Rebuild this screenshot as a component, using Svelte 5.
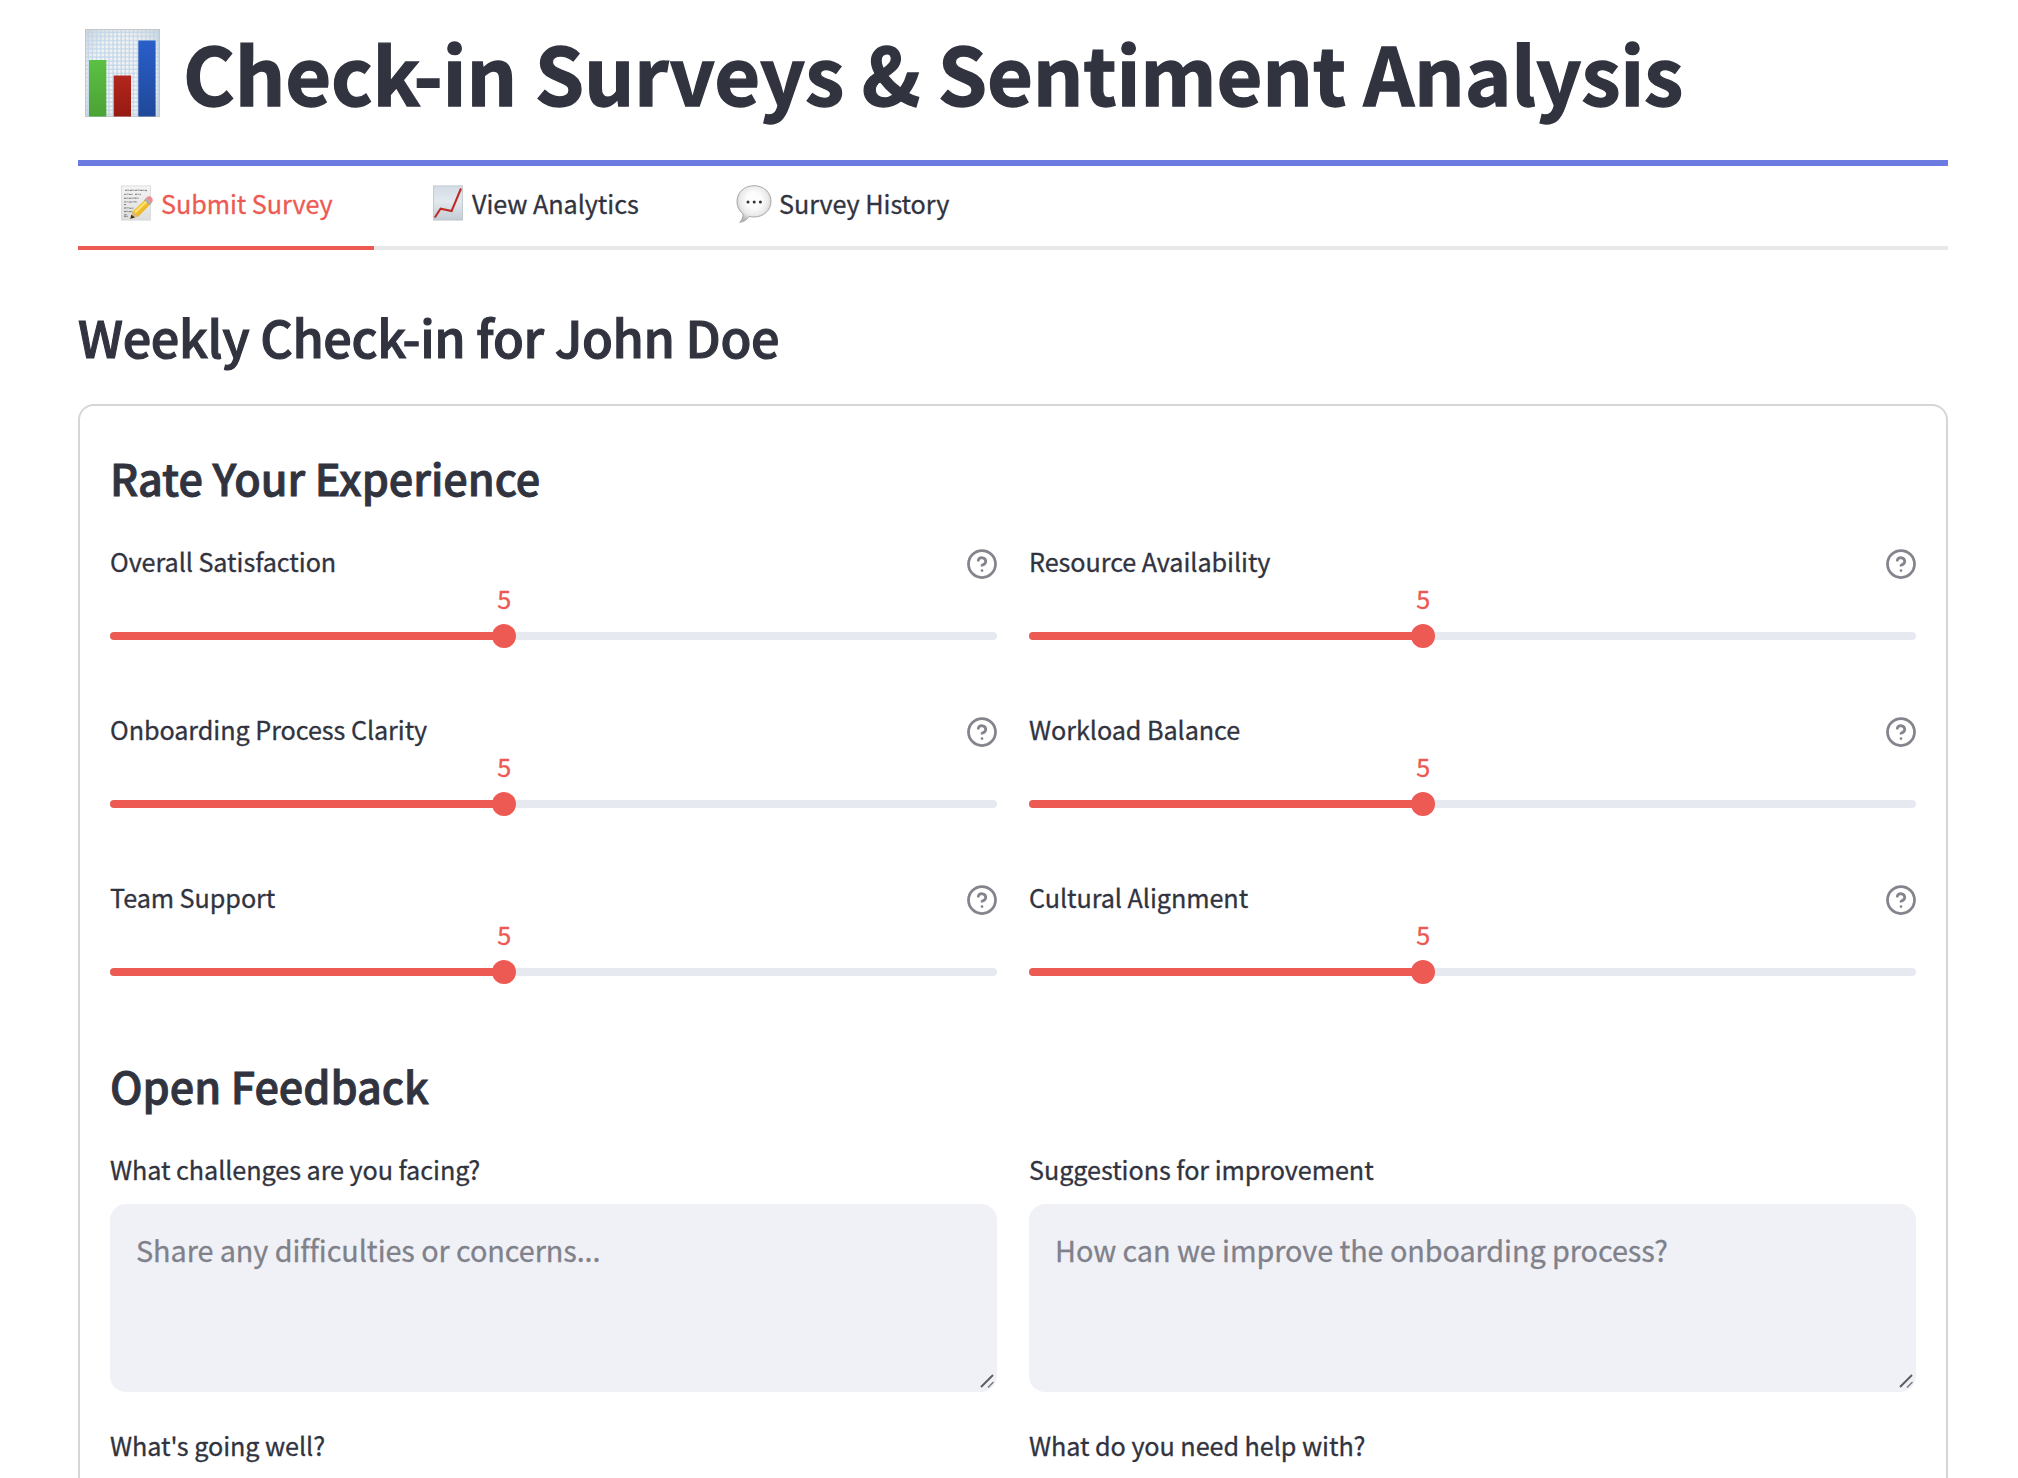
<script>
  const ratings = $state([
    { label: 'Overall Satisfaction', value: 5 },
    { label: 'Resource Availability', value: 5 },
    { label: 'Onboarding Process Clarity', value: 5 },
    { label: 'Workload Balance', value: 5 },
    { label: 'Team Support', value: 5 },
    { label: 'Cultural Alignment', value: 5 }
  ]);
  const feedback = [
    { label: 'What challenges are you facing?', hint: 'Share any difficulties or concerns...' },
    { label: 'Suggestions for improvement', hint: 'How can we improve the onboarding process?' },
    { label: "What's going well?", hint: '' },
    { label: 'What do you need help with?', hint: '' }
  ];
  // Ratings run from 1 to 10
  const percent = (v) => ((v - 1) / 9) * 100;
</script>

<main>
  <h1>
    <svg class="chart" viewBox="0 0 75 88" aria-hidden="true">
      <defs>
        <pattern id="grid" width="4.1" height="4.1" patternUnits="userSpaceOnUse">
          <path d="M0 3.4H4.1M3.4 0V4.1" stroke="#bcd4ea" stroke-width="1.1" />
        </pattern>
        <radialGradient id="sheet" cx=".5" cy=".5" r=".75">
          <stop offset=".55" stop-color="#f1f2f2" />
          <stop offset="1" stop-color="#c9ccce" />
        </radialGradient>
        <linearGradient id="green" x2="0" y2="1"><stop stop-color="#5cc043" /><stop offset="1" stop-color="#4aa235" /></linearGradient>
        <linearGradient id="red" x2="0" y2="1"><stop stop-color="#b3261c" /><stop offset="1" stop-color="#951b12" /></linearGradient>
        <linearGradient id="blue" x2="0" y2="1"><stop stop-color="#295fc9" /><stop offset="1" stop-color="#20489a" /></linearGradient>
      </defs>
      <rect width="75" height="88" fill="url(#sheet)" />
      <rect width="75" height="88" fill="url(#grid)" />
      <rect x=".5" y=".5" width="74" height="87" fill="none" stroke="#c5c8ca" />
      <rect x="4" y="31" width="17.3" height="56.5" fill="url(#green)" />
      <rect x="28.7" y="46.5" width="17.3" height="41" fill="url(#red)" />
      <rect x="53.3" y="11.5" width="17.3" height="76" fill="url(#blue)" />
    </svg>
    <span>Check-in Surveys &amp; Sentiment Analysis</span>
  </h1>

  <nav>
    <button class="tab active">
      <svg class="memo" viewBox="0 0 32 36" aria-hidden="true">
        <defs>
          <linearGradient id="paper" x2="0" y2="1"><stop stop-color="#f4f4f4" /><stop offset="1" stop-color="#dcdddd" /></linearGradient>
          <linearGradient id="pencil" x2="1" y2="1"><stop stop-color="#ffe04d" /><stop offset=".5" stop-color="#f4c22c" /><stop offset="1" stop-color="#c88a12" /></linearGradient>
        </defs>
        <rect x=".5" y=".9" width="29" height="34.2" fill="url(#paper)" stroke="#d6d7d8" stroke-width=".8" />
        <path d="M4 5.5l3-.5 2 .6 2-.5 3 .4 3-.5 3 .4 4 0 2 .3M3 9.5l4-.4 2 .4 3-.3M14 9.4l3-.2 3 .3M3 13.3l3-.3 3 .4 5-.4 4 .3M3 17l3-.3 3 .4 4-.4 3 .3M3 19.5l2 .2M3 23.2l4-.4 3 .5 3-.3M3 26.7l3-.3 3 .3 3-.4M3 30l3-.4M3 31.5l4-.2" fill="none" stroke="#85878a" stroke-width="1.2" stroke-dasharray="2.6 .7 1.2 .6" />
        <path d="M9.300 33.700l2.400-7.400L24.300 14.200l5.300 4.700-12.100 12.300z" fill="url(#pencil)" />
        <path d="M11.700 26.300l5.600 5-8 2.400z" fill="#d9b878" />
        <path d="M9.300 33.700l1.100-3.900 3.600 2.700z" fill="#34322e" />
        <path d="M23 15.200l1.900-1.900 5.600 5-1.900 2z" fill="#a3abb0" />
        <path d="M24.900 13.300c1.200-2.300 3.600-2.700 5.300-1.300 1.900 1.600 2 4.200.3 6.300z" fill="#ee8b90" />
        <path d="M14.200 27.400L25.400 16.600" stroke="#ffe88a" stroke-width="1.500" />
      </svg>
      <span>Submit Survey</span>
    </button>
    <button class="tab">
      <svg class="trend" viewBox="0 0 30 36" aria-hidden="true">
        <defs>
          <linearGradient id="sky" x2="0" y2="1"><stop stop-color="#d3dce4" /><stop offset=".45" stop-color="#e2e8ee" /><stop offset="1" stop-color="#c3ccd4" /></linearGradient>
        </defs>
        <rect x=".4" y=".9" width="29.2" height="34.2" fill="url(#sky)" stroke="#bcc4cb" stroke-width=".8" />
        <path d="M1.800 32.500L7.600 23.700L18.600 26L28 3.500" fill="none" stroke="#bf2a22" stroke-width="2" />
      </svg>
      <span>View Analytics</span>
    </button>
    <button class="tab">
      <svg class="bubble" viewBox="0 0 36 38" aria-hidden="true">
        <defs>
          <radialGradient id="balloon" cx=".5" cy=".4" r=".6">
            <stop offset=".35" stop-color="#fdfdfd" />
            <stop offset=".7" stop-color="#e9e9e9" />
            <stop offset="1" stop-color="#b4b4b4" />
          </radialGradient>
        </defs>
        <path d="M18 .7C27.500.7 35 7.300 35 16.300S27.500 32 18 32c-1.700 0-3.300-.2-4.800-.6C11 34.600 7.500 37 3.800 37.300c1.900-2 3.200-4.700 3.400-8.300C3.300 26.200 1 21.600 1 16.300 1 7.300 8.500.7 18 .7z" fill="url(#balloon)" stroke="#a9a9a9" stroke-width="1" />
        <circle cx="12" cy="17" r="1.5" fill="#333" />
        <circle cx="18.200" cy="17" r="1.5" fill="#333" />
        <circle cx="24.400" cy="17" r="1.5" fill="#333" />
      </svg>
      <span>Survey History</span>
    </button>
  </nav>

  <h2>Weekly Check-in for John Doe</h2>

  <form>
    <h3>Rate Your Experience</h3>
    <div class="ratings">
      {#each ratings as r}
        <div class="field">
          <div class="head">
            <span class="label">{r.label}</span>
            <svg class="help" viewBox="0 0 24 24" fill="none" stroke="currentColor" stroke-width="2.2" stroke-linecap="round" stroke-linejoin="round" aria-hidden="true">
              <circle cx="12" cy="12" r="10.800" />
              <path d="M9 9a3.100 3.100 0 0 1 6 1c0 2-3 3-3 3M12 17.200h.01" />
            </svg>
          </div>
          <div class="track">
            <div class="fill" style:width="{percent(r.value)}%">
              <span class="value">{r.value}</span>
              <span class="thumb"></span>
            </div>
          </div>
        </div>
      {/each}
    </div>

    <h3 class="second">Open Feedback</h3>
    <div class="notes">
      {#each feedback as f}
        <div>
          <div class="label">{f.label}</div>
          <div class="area">
            <textarea placeholder={f.hint}></textarea>
            <svg class="grip" viewBox="0 0 14 14" aria-hidden="true">
              <path d="M1 13L13 1" stroke="#5c5d60" stroke-width="1.900" />
              <path d="M8 13.500L13.500 8" stroke="#77787c" stroke-width="1.500" />
            </svg>
          </div>
        </div>
      {/each}
    </div>
  </form>
</main>

<style>
  :global(body) { margin: 0; background: #fff; overflow: hidden; }
  main {
    box-sizing: border-box;
    height: 1478px;
    overflow: hidden;
    padding: 0 70px 0 78px;
    color: #31333f;
    font: 400 25.2px/32px "Noto Sans CJK SC", "Noto Sans", sans-serif;
    letter-spacing: -0.06px;
  }
  svg { display: block; flex: none; }
  h1, h2, h3 { margin: 0; white-space: nowrap; }

  h1 {
    display: flex;
    gap: 23px;
    height: 143px;
    padding: 0 0 17px 7px;
    border-bottom: 6px solid #6b7be0;
    font-size: 79.2px;
    font-weight: 700;
    line-height: 143px;
    letter-spacing: -0.225px;
    -webkit-text-stroke: 1.3px currentColor;
  }
  .chart { width: 75px; height: 88px; margin-top: 29px; }

  nav {
    display: flex;
    gap: 16px;
    height: 84px;
    box-shadow: inset 0 -4px #e8e8e9;
  }
  .tab {
    display: flex;
    align-items: center;
    box-sizing: border-box;
    width: 296px;
    height: 84px;
    padding: 0 0 11px 43px;
    border: 0;
    background: none;
    color: inherit;
    font: inherit;
    letter-spacing: inherit;
    white-space: nowrap;
  }
  .tab.active { color: #ec5a53; box-shadow: inset 0 -4px #ec5a53; }
  .tab + .tab { width: 290px; }
  .tab span { -webkit-text-stroke: 0.3px currentColor; }
  .memo { width: 32px; height: 36px; margin-right: 8px; }
  .trend { width: 30px; height: 36px; margin-right: 9px; }
  .bubble { width: 36px; height: 38px; margin: 2px 7px 0 -3px; }

  h2 {
    height: 64px;
    margin: 55px 0 35px;
    font-size: 50.4px;
    font-weight: 500;
    line-height: 64px;
    letter-spacing: -0.37px;
    -webkit-text-stroke: 1.1px currentColor;
  }

  form {
    height: 1400px;
    padding: 39px 30px 0;
    border: 2px solid #d5d6d8;
    border-radius: 16px;
  }
  h3 {
    height: 64px;
    font-size: 43.2px;
    font-weight: 500;
    line-height: 64px;
    letter-spacing: -0.03px;
    -webkit-text-stroke: 0.9px currentColor;
  }
  .second { margin-top: 69px; }

  .ratings, .notes { display: grid; grid-template-columns: 1fr 1fr; column-gap: 32px; }
  .ratings { row-gap: 65px; margin-top: 36px; }
  .field { height: 103px; }
  .head { display: flex; justify-content: space-between; align-items: flex-start; height: 32px; }
  .label { height: 32px; white-space: nowrap; -webkit-text-stroke: 0.3px currentColor; }
  .help { width: 30px; height: 30px; margin-top: 4px; color: #83848c; }

  .track { height: 8px; margin-top: 55px; border-radius: 4px; background: #e6e9ef; }
  .fill { position: relative; height: 8px; border-radius: 4px; background: #ec5a53; }
  .value {
    position: absolute;
    right: -20px;
    bottom: 26px;
    width: 40px;
    text-align: center;
    color: #ec5a53;
    -webkit-text-stroke: 0.3px currentColor;
  }
  .thumb {
    position: absolute;
    right: -12px;
    top: -8px;
    width: 24px;
    height: 24px;
    border-radius: 50%;
    background: #ec5a53;
  }

  .notes { row-gap: 37px; margin-top: 36px; }
  .area { position: relative; height: 188px; margin-top: 19px; }
  textarea {
    display: block;
    box-sizing: border-box;
    width: 100%;
    height: 188px;
    padding: 23px 26px;
    border: 0;
    border-radius: 16px;
    background: #f0f1f6;
    resize: none;
    font: 400 28.8px/45px "Noto Sans CJK SC", "Noto Sans", sans-serif;
    letter-spacing: -0.07px;
  }
  textarea::placeholder { color: #80818a; opacity: 1; -webkit-text-stroke: 0.3px #80818a; }
  .grip { position: absolute; right: 3px; bottom: 4px; width: 14px; height: 14px; }
</style>
